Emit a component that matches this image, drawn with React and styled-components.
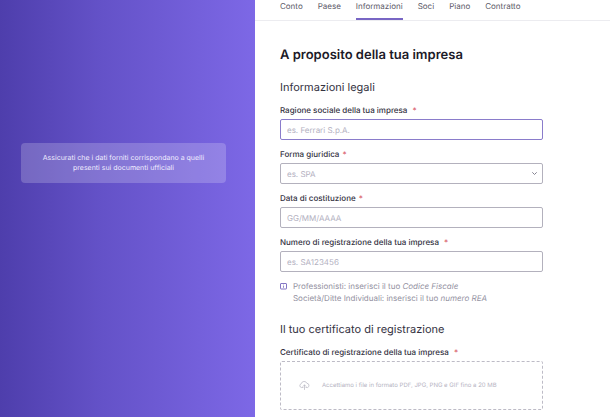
import React from "react";
import styled, { createGlobalStyle } from "styled-components";

const GlobalStyle = createGlobalStyle`
  * {
    box-sizing: border-box;
  }
  body {
    margin: 0;
    background-color: #fff;
    color: #34323f;
    font-family: "Inter", "Liberation Sans", sans-serif;
    font-size: 8px;
    line-height: 10px;
    text-rendering: geometricPrecision;
  }
  h1,
  h2,
  p {
    margin: 0;
  }
`;

const Page = styled.div`
  display: flex;
  min-height: 100vh;
`;

const Sidebar = styled.aside`
  flex: 0 0 41.8%;
  padding: 143px 29px 0 21px;
  background: linear-gradient(90deg, #4e3eac 0%, #6452c8 40%, #7d68e6 100%);
`;

const Notice = styled.p`
  padding: 10px 16px;
  border-radius: 4px;
  background-color: rgba(255, 255, 255, 0.2);
  color: #f0edff;
  font-size: 7px;
  text-align: center;
`;

const Main = styled.main`
  flex: 1;
  min-width: 0;
`;

const Tabs = styled.nav`
  display: flex;
  gap: 15px;
  padding-left: 25px;
  border-bottom: 1px solid #ececf0;
`;

const Tab = styled.a`
  padding: 1px 0 7px;
  border-bottom: 2px solid ${(props) => (props.$active ? "#7866c4" : "transparent")};
  color: #5b5967;
  text-decoration: none;
`;

const Form = styled.form`
  max-width: 312px;
  padding: 25px 24px 8px 25px;
`;

const Title = styled.h1`
  color: #1c1a28;
  font-size: 13px;
  font-weight: 600;
  line-height: 18px;
`;

const SectionTitle = styled.h2`
  margin: 16px 0 11px;
  font-size: 11px;
  font-weight: 400;
  line-height: 14px;
`;

const Fields = styled.div`
  display: flex;
  flex-direction: column;
  gap: 9px;
`;

const Field = styled.div`
  display: flex;
  flex-direction: column;
  gap: 4px;
`;

const Label = styled.label`
  font-weight: 500;
  span {
    margin-left: ${(props) => (props.$wide ? "3px" : "1px")};
    color: #d9606c;
  }
`;

const Input = styled.input`
  width: 100%;
  height: 21px;
  padding: 0 6px;
  border: 1px solid ${(props) => (props.$active ? "#8a7ccb" : "#b3b1bd")};
  border-radius: 2px;
  background-color: #fff;
  color: #2a2838;
  font: inherit;
  text-rendering: inherit;
  outline: none;
  &::placeholder {
    color: #b3b1bf;
    opacity: 1;
  }
`;

const SelectWrap = styled.div`
  position: relative;
  svg {
    position: absolute;
    top: 7px;
    right: 5px;
    pointer-events: none;
  }
`;

const Select = styled(Input)`
  display: block;
  appearance: none;
  color: #b3b1bf;
`;

const Hint = styled.div`
  display: flex;
  gap: 6px;
  margin: 8px 0 18px;
  color: #9391a1;
  line-height: 12px;
  svg {
    flex: none;
    margin-top: 3px;
  }
`;

const DropZone = styled.label`
  position: relative;
  display: flex;
  align-items: center;
  gap: 12px;
  height: 49px;
  padding: 0 18px;
  border: 1px dashed #bdbbc6;
  border-radius: 2px;
  color: #b5b3c2;
  font-size: 6px;
  cursor: pointer;
  input {
    position: absolute;
    inset: 0;
    width: 100%;
    opacity: 0;
  }
`;

const tabs = ["Conto", "Paese", "Informazioni", "Soci", "Piano", "Contratto"];

const ChevronIcon = () => (
  <svg width="7" height="7" viewBox="0 0 7 7" fill="none" stroke="#858391">
    <path d="M1.3 2.3 3.5 4.5 5.7 2.3" />
  </svg>
);

const InfoIcon = () => (
  <svg width="7" height="7" viewBox="0 0 7 7" fill="none" stroke="#7668bd">
    <rect x="0.5" y="0.5" width="6" height="5.5" rx="0.5" strokeWidth="0.9" />
    <path d="M3.5 1.6v0.7M3.5 2.8v2" strokeWidth="0.8" />
  </svg>
);

const UploadIcon = () => (
  <svg
    width="11"
    height="9"
    viewBox="0 0 11 9"
    fill="none"
    stroke="#b5b3be"
    strokeWidth="0.7"
    strokeLinecap="round"
    strokeLinejoin="round"
  >
    <path d="M4 6.5H2.4a1.9 1.9 0 0 1-.2-3.7 3 3 0 0 1 5.7-.5 2.2 2.2 0 0 1 .8 4.2H7" />
    <path d="M5.5 8.5V4M4 5.4 5.5 3.9 7 5.4" />
  </svg>
);

function FieldLabel({ id, wide, children }) {
  return (
    <Label htmlFor={id} $wide={wide}>
      {children} <span>*</span>
    </Label>
  );
}

export default function App() {
  return (
    <Page>
      <GlobalStyle />
      <Sidebar>
        <Notice>
          Assicurati che i dati forniti corrispondano a quelli presenti sui
          documenti ufficiali
        </Notice>
      </Sidebar>
      <Main>
        <Tabs>
          {tabs.map((tab) => (
            <Tab key={tab} href="#" $active={tab === "Informazioni"}>
              {tab}
            </Tab>
          ))}
        </Tabs>
        <Form>
          <Title>A proposito della tua impresa</Title>
          <SectionTitle>Informazioni legali</SectionTitle>
          <Fields>
            <Field>
              <FieldLabel id="company" wide>
                Ragione sociale della tua impresa
              </FieldLabel>
              <Input id="company" placeholder="es. Ferrari S.p.A." $active />
            </Field>
            <Field>
              <FieldLabel id="legal-form">Forma giuridica</FieldLabel>
              <SelectWrap>
                <Select as="select" id="legal-form">
                  <option>es. SPA</option>
                </Select>
                <ChevronIcon />
              </SelectWrap>
            </Field>
            <Field>
              <FieldLabel id="founded">Data di costituzione</FieldLabel>
              <Input id="founded" placeholder="GG/MM/AAAA" />
            </Field>
            <Field>
              <FieldLabel id="number" wide>
                Numero di registrazione della tua impresa
              </FieldLabel>
              <Input id="number" placeholder="es. SA123456" />
            </Field>
          </Fields>
          <Hint>
            <InfoIcon />
            <p>
              Professionisti: inserisci il tuo <em>Codice Fiscale</em>
              <br />
              Società/Ditte Individuali: inserisci il tuo <em>numero REA</em>
            </p>
          </Hint>
          <SectionTitle>Il tuo certificato di registrazione</SectionTitle>
          <Field>
            <FieldLabel id="certificate" wide>
              Certificato di registrazione della tua impresa
            </FieldLabel>
            <DropZone>
              <UploadIcon />
              Accettiamo i file in formato PDF, JPG, PNG e GIF fino a 20 MB
              <input type="file" id="certificate" />
            </DropZone>
          </Field>
        </Form>
      </Main>
    </Page>
  );
}
